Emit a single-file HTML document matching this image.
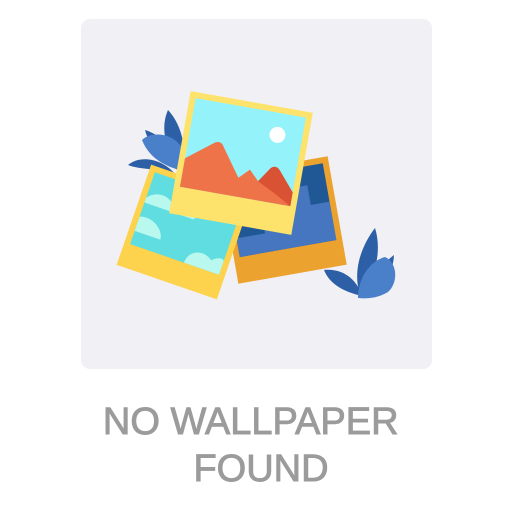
<!DOCTYPE html>
<html><head><style>
html,body{margin:0;padding:0;background:#fff;width:512px;height:512px;overflow:hidden}
.card{position:absolute;left:81px;top:19px;width:351px;height:350px;border-radius:9px;background:#f1f0f5}
.t{position:absolute;left:0;width:512px;text-align:center;font-family:"Liberation Sans",sans-serif;font-size:38px;color:#9b9b9b;line-height:38px;-webkit-text-stroke:0.9px #9b9b9b}
</style></head><body>
<div class="card"></div>
<svg style="position:absolute;left:0;top:0" width="512" height="512">
 <!-- left leaves -->
 <g fill="#2d5fa6">
  <path d="M182 178 C165 150 160 128 168 110 C182 125 188 150 182 178Z"/>
  <path d="M180 172 C165 160 150 150 145 130 C162 135 175 150 180 172Z"/>
  <path d="M176 175 C160 168 140 170 128 165 C140 155 162 158 176 175Z"/>
 </g>
 <g fill="#4a7fca">
  <path d="M188 172 C168 168 150 160 142 140 C150 132 170 132 180 145 C188 152 190 162 188 172Z"/>
 </g>
 <!-- right leaves -->
 <g fill="#2d5fa6">
  <path d="M360 295 C352 270 362 245 375 228 C382 250 376 278 360 295Z"/>
  <path d="M362 296 C345 292 330 285 324 270 C345 268 358 282 362 296Z"/>
  <path d="M365 292 C375 272 385 262 394 255 C393 275 382 288 365 292Z"/>
 </g>
 <g fill="#4a7fca">
  <path d="M358 298 C358 280 368 262 385 257 C397 262 399 282 388 292 C378 298 368 299 358 298Z"/>
 </g>
 <!-- right photo -->
 <g transform="translate(283,220) rotate(-10)">
  <rect x="-55" y="-55" width="110" height="110" fill="#eca22f"/>
  <rect x="-49" y="-49" width="98" height="78" fill="#1f5895"/>
  <path d="M-49 29 L-49 10 L-20 10 L-20 -5 L0 -5 L0 -20 L15 -20 L15 -30 L30 -30 L30 -10 L49 -10 L49 29Z" fill="#4576bf"/>
 </g>
 <!-- left photo -->
 <g transform="translate(184,232) rotate(19)">
  <rect x="-53" y="-53" width="106" height="106" fill="#fdd24c"/>
  <rect x="-47" y="-47" width="94" height="76" fill="#5fdde0"/>
  <path d="M-47 -20 C-40 -30 -25 -30 -20 -22 C-10 -30 10 -25 5 -15 L-47 -15Z" fill="#b8f8ee"/>
  <path d="M-47 0 C-35 -5 -20 5 -20 15 L-47 15Z" fill="#b8f8ee"/>
  <path d="M10 29 C10 15 25 10 35 18 C40 12 47 12 47 15 L47 29Z" fill="#b8f8ee"/>
 </g>
 <!-- top photo -->
 <g transform="translate(241,163) rotate(10)">
  <rect x="-62" y="-62" width="124" height="124" fill="#fde36b"/>
  <rect x="-56" y="-56" width="112" height="90" fill="#94f2fa"/>
  <path d="M-56 5 L-30 -15 C-26 -18 -22 -17 -20 -13 L0 15 L10 5 L20 15 L30 0 C33 -3 36 -3 39 0 L56 20 L56 34 L-56 34Z" fill="#ef7349"/>
  <path d="M20 15 L30 0 C33 -3 36 -3 39 0 L56 20 L56 34 L40 25Z" fill="#d95234"/>
  <circle cx="31" cy="-34" r="8" fill="#fff"/>
 </g>
</svg>
<div class="t" style="top:403px">NO WALLPAPER&nbsp;</div>
<div class="t" style="top:450px;left:5px">FOUND</div>
</body></html>
